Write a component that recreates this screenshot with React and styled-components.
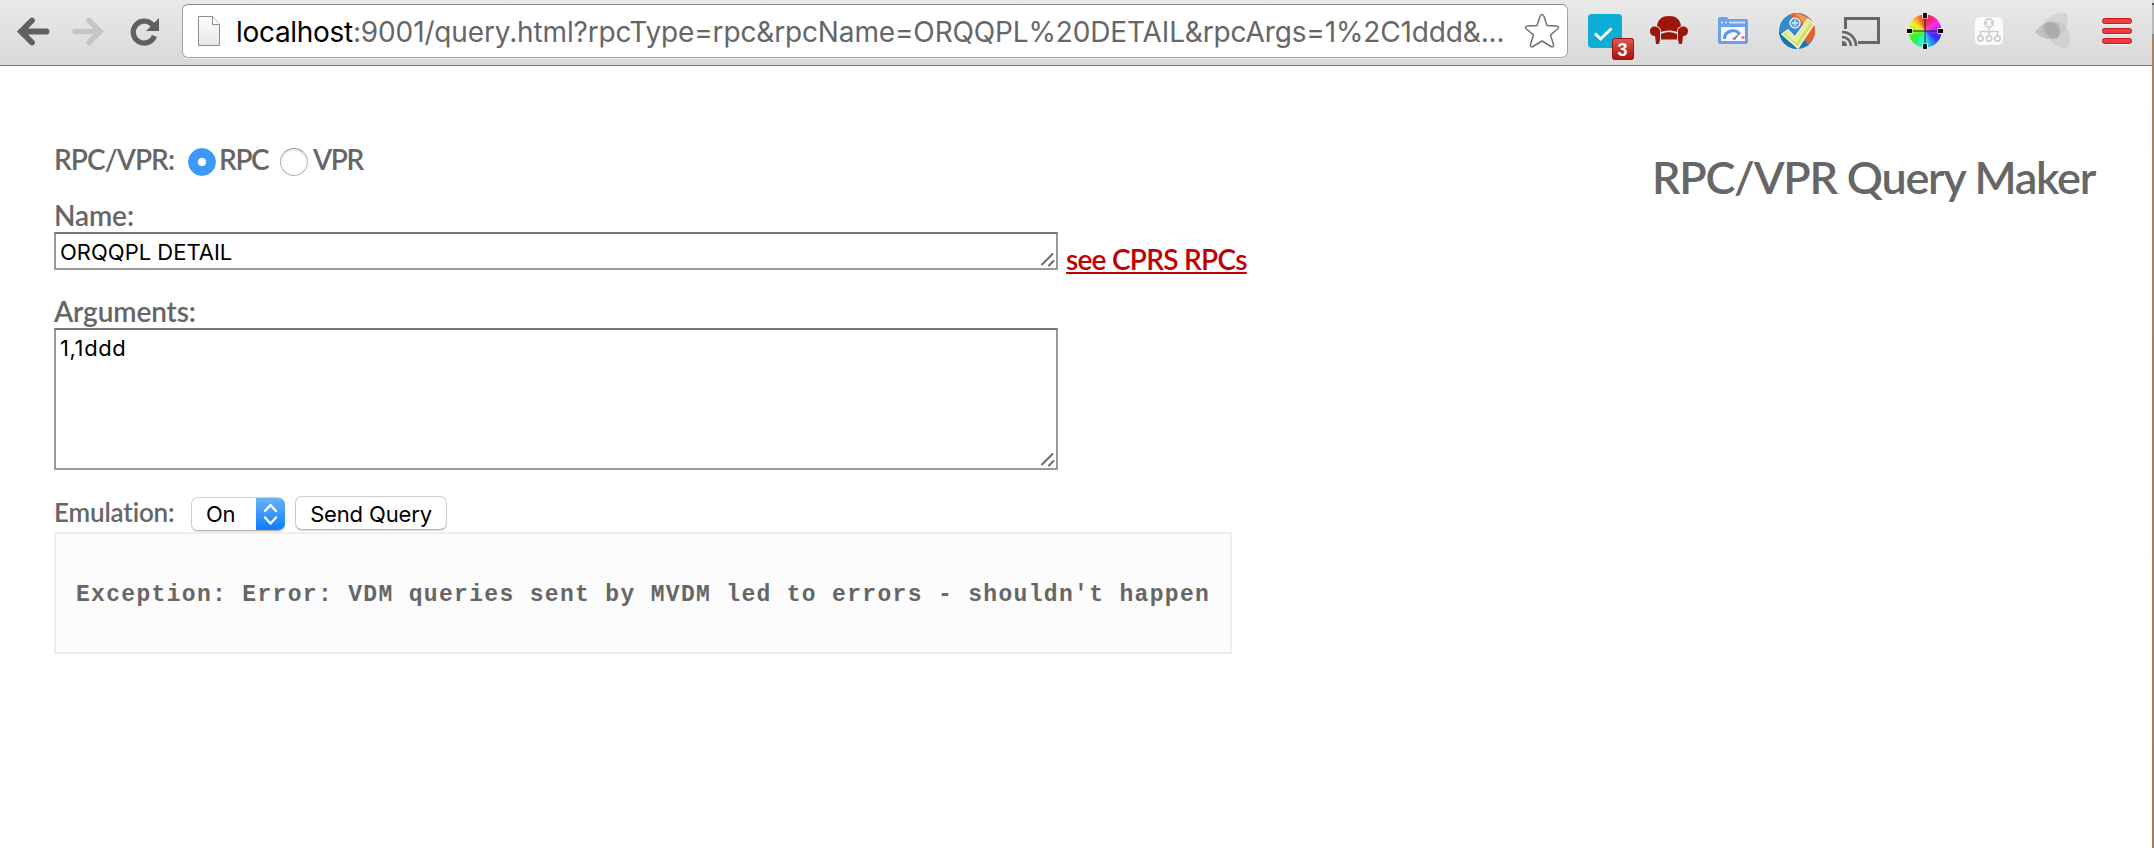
import React from 'react';
import styled, { createGlobalStyle } from 'styled-components';

const GlobalStyle = createGlobalStyle`
  * { box-sizing: border-box; }
  body { margin: 0; background: #fff; overflow: hidden; }
`;

const Window = styled.div`
  display: flex;
  width: 2154px;
  height: 848px;
`;
const Browser = styled.div`
  width: 2152px;
  height: 848px;
`;
const WindowEdge = styled.div`
  width: 2px;
  height: 848px;
  background: linear-gradient(#d8d8d8 3px, #555 3px 5px, #b8b8b8 5px 34px, #888 34px 37px, #a58464 37px 44px, #a07e62 100%);
`;

const Toolbar = styled.header`
  display: flex;
  height: 66px;
  padding-left: 5px;
  background: linear-gradient(#e9e9e9, #d9d9d9);
  border-bottom: 1px solid #777;
`;
const NavIcon = styled.svg`
  width: 55px;
  height: 65px;
  flex: none;
`;
const ExtensionIcon = styled.svg`
  width: 64px;
  height: 65px;
  flex: none;
`;
const AddressBar = styled.div`
  display: flex;
  align-items: center;
  width: 1386px;
  height: 54px;
  margin: 4px 5px 0 12px;
  background: #fff;
  border: 1px solid #a2a2a2;
  border-top-color: #8c8c8c;
  border-radius: 6px;
  box-shadow: 0 1px 0 #f0f0f0;
  flex: none;
`;
const PageIcon = styled.svg`
  width: 24px;
  height: 34px;
  margin: 0 15px 0 14px;
  flex: none;
`;
const Url = styled.div`
  width: 1277px;
  margin-top: 2px;
  font: 400 28px/36px Inter, Roboto, sans-serif;
  letter-spacing: ${(p) => p.$tracking}px;
  white-space: nowrap;
  color: #666;
  flex: none;
`;
const Host = styled.span`
  color: #000;
  letter-spacing: -0.3px;
`;
const StarIcon = styled.svg`
  width: 38px;
  height: 38px;
  margin-left: 10px;
  flex: none;
`;

const Page = styled.main`
  display: flex;
  justify-content: space-between;
  align-items: flex-start;
  padding: 76px 57px 0 54px;
`;
const Form = styled.form`
  display: flex;
  flex-direction: column;
`;
const Title = styled.h1`
  margin: 8px 0 0;
  font: 600 45px/54px Lato, sans-serif;
  letter-spacing: -1.27px;
  color: #666;
  white-space: nowrap;
`;
const Row = styled.div`
  display: flex;
  align-items: flex-start;
  height: ${(p) => p.$height}px;
  margin-bottom: ${(p) => p.$gap || 0}px;
`;
const Label = styled.label`
  font: 600 ${(p) => p.$size || 28}px/${(p) => (p.$size ? 32 : 34)}px Lato, sans-serif;
  letter-spacing: ${(p) => p.$tracking || 0}px;
  font-variant-ligatures: none;
  width: ${(p) => (p.$width ? `${p.$width}px` : 'auto')};
  white-space: nowrap;
  color: #666;
`;
const Radio = styled.input`
  appearance: none;
  width: 28px;
  height: 28px;
  margin: 6px ${(p) => p.$space}px 0 0;
  border-radius: 50%;
  border: 1px solid #b5b5b5;
  border-top-color: #a0a0a0;
  background: #fff;
  box-shadow: inset 0 2px 2px #e6e6e6;
  &:checked {
    border-color: #3b99fc;
    background: radial-gradient(circle, #fff 3.6px, #3b99fc 4.6px);
    box-shadow: none;
  }
`;
const Field = styled.div`
  position: relative;
  width: 1004px;
  height: ${(p) => p.$height}px;
`;
const TextArea = styled.textarea`
  display: block;
  width: 100%;
  height: 100%;
  margin: 0;
  padding: 5px 4px 0;
  border: 2px solid #999;
  border-top-color: #757575;
  resize: none;
  overflow: hidden;
  outline: none;
  background: #fff;
  color: #000;
  font: 400 22px/26px Inter, Roboto, sans-serif;
  letter-spacing: ${(p) => p.$tracking || 0}px;
`;
const Grip = styled.svg`
  position: absolute;
  right: 2px;
  bottom: 2px;
  width: 16px;
  height: 16px;
`;
const Link = styled.a`
  margin: 10px 0 0 8px;
  font: 600 28px/34px Lato, sans-serif;
  letter-spacing: -0.74px;
  color: #c00000;
  text-decoration: underline;
  text-decoration-thickness: 2px;
  text-underline-offset: 2px;
  text-decoration-skip-ink: none;
  white-space: nowrap;
`;
const SelectBox = styled.div`
  display: flex;
  width: 94px;
  height: 34px;
  margin: 1px 10px 0 0;
  border: 1px solid #cfcfcf;
  border-bottom-color: #b5b5b5;
  border-right: 0;
  border-radius: 7px;
  overflow: hidden;
  background: #fff;
  box-shadow: 0 1px 1px rgba(0, 0, 0, 0.12);
`;
const Select = styled.select`
  appearance: none;
  width: 64px;
  height: 32px;
  padding: 0 0 0 14px;
  border: 0;
  background: #fff;
  color: #000;
  font: 400 22px/32px Inter, Roboto, sans-serif;
  letter-spacing: -0.3px;
`;
const Stepper = styled.svg`
  width: 29px;
  height: 34px;
  margin-top: -1px;
  flex: none;
`;
const Button = styled.button`
  width: 152px;
  height: 34px;
  padding: 1px 0 0;
  border: 1px solid #cdcdcd;
  border-bottom-color: #b0b0b0;
  border-radius: 7px;
  background: #fff;
  box-shadow: 0 1px 1px rgba(0, 0, 0, 0.12);
  color: #000;
  font: 400 22px/32px Inter, Roboto, sans-serif;
  letter-spacing: -0.15px;
  white-space: nowrap;
`;
const Result = styled.pre`
  width: 1178px;
  height: 122px;
  margin: 0;
  padding: 47px 20px 0;
  border: 2px solid #eee;
  background: #fcfcfc;
  color: #666;
  font: 700 23px/28px "Courier New", "Liberation Mono", monospace;
  letter-spacing: 1.32px;
`;

const ResizeGrip = () => (
  <Grip viewBox="0 0 16 16">
    <path d="M1.500 13 13 1.500M8.500 14l5.500-5.500" stroke="#666" strokeWidth="1.800" fill="none" />
  </Grip>
);

const WHEEL_STEPS = 36;
const wheelSlice = (i) => {
  const r = 16.5;
  const a = (i / WHEEL_STEPS) * 2 * Math.PI;
  const b = ((i + 1.1) / WHEEL_STEPS) * 2 * Math.PI;
  return `M32 31L${32 + r * Math.sin(a)} ${31 - r * Math.cos(a)}A${r} ${r} 0 0 1 ${32 + r * Math.sin(b)} ${31 - r * Math.cos(b)}Z`;
};
const wheelColor = (i) => `hsl(${355 - (i * 360) / WHEEL_STEPS} 92% 55%)`;

const Extensions = () => (
  <>
    <ExtensionIcon viewBox="0 0 64 65">
      <rect x="15" y="14" width="34" height="34" rx="4" fill="#0caed6" />
      <path d="M22 33.500l5.500 5.500 11-10.500" fill="none" stroke="#fff" strokeWidth="3" />
      <defs>
        <linearGradient id="badge" x1="0" y1="0" x2="0" y2="1">
          <stop stopColor="#e05a55" />
          <stop offset="1" stopColor="#a80f0b" />
        </linearGradient>
      </defs>
      <rect x="39.5" y="38.5" width="21" height="21" rx="2" fill="url(#badge)" stroke="#a1120e" />
      <text x="49.5" y="55.5" textAnchor="middle" fontFamily="Liberation Sans, sans-serif" fontWeight="700" fontSize="18" fill="#fff">3</text>
    </ExtensionIcon>
    <ExtensionIcon viewBox="0 0 64 65">
      <g fill="#9c160c">
        <path d="M20 26c1-7 5-10 12-10s11 3 12 10c-3 1-4 3-4 6-5-2-11-2-16 0 0-3-1-5-4-6Z" />
        <path d="M13 31c0-3 2-4.500 4.500-4.500S23 28 23 31v9l-1 4h-3l-1-8c-3 0-5-2-5-5ZM51 31c0-3-2-4.500-4.500-4.500S41 28 41 31v9l1 4h3l1-8c3 0 5-2 5-5Z" />
        <path d="M24 34c5-2.500 11-2.500 16 0v5.500H24Z" />
      </g>
    </ExtensionIcon>
    <ExtensionIcon viewBox="0 0 64 65">
      <path d="M17 19q0-2 2-2h6q2 0 2 2h18q2 0 2 2v21q0 2-2 2H19q-2 0-2-2Z" fill="#6c9fec" />
      <path d="M20 22.500h2M24 22.500h2M28 22.500h16" stroke="#c8ddff" strokeWidth="2" />
      <rect x="20" y="27" width="24" height="14" fill="#f3f7ff" />
      <path d="M23.500 39c0-9 12-11 15-4.500" fill="none" stroke="#5b94e9" strokeWidth="3" />
      <path d="M31 39l8-6-5 7Z" fill="#7d7d84" />
      <path d="M42 36v3" stroke="#ee7e78" strokeWidth="3" />
    </ExtensionIcon>
    <ExtensionIcon viewBox="0 0 64 65">
      <circle cx="32" cy="31" r="18" fill="#3389c9" />
      <path d="M24 15C34 10 47 17 50 28c1 8-3 13-8 17l-4-19Z" fill="#e9622c" />
      <path d="M29 14c8-1 14 4 17 9l-7 4c-1-6-4-10-10-13Z" fill="#f49a50" />
      <path d="M14 32c1 8 8 16 17 17l13-4-11-9Z" fill="#1b75b1" />
      <circle cx="30" cy="23" r="5" fill="#579bd9" stroke="#d9edff" strokeWidth="1.500" />
      <path d="M30 20v6M27 23h6" stroke="#d9edff" strokeWidth="1.300" />
      <path d="M17 34l6-4 7 7 13-18 6 5-16 24Z" fill="#d3df72" stroke="#f4f8c8" strokeWidth="1.500" />
      <path d="M22 33l9 8 13-19" fill="none" stroke="#e9f0a8" strokeWidth="2.500" />
    </ExtensionIcon>
    <ExtensionIcon viewBox="0 0 64 65">
      <path d="M16.500 29V18.500h33v24H29" fill="none" stroke="#666" strokeWidth="3" />
      <path d="M13 32c8 0 14 6 14 14M13 37c5 0 9 4 9 9" fill="none" stroke="#666" strokeWidth="2.600" />
      <path d="M13 41q5 0 5 5h-5Z" fill="#666" />
    </ExtensionIcon>
    <ExtensionIcon viewBox="0 0 64 65">
      {Array.from({ length: WHEEL_STEPS }, (_, i) => (
        <path key={i} d={wheelSlice(i)} fill={wheelColor(i)} />
      ))}
      <path d="M32 18v26M19 31h26" stroke="#24242a" strokeWidth="1" />
      <path d="M32 13v5.500M32 43.500v5.500M14 31h5.500M44.500 31h5.500" stroke="#fff" strokeWidth="5.500" />
      <path d="M32 13v5M32 44v5M14 31h5M45 31h5" stroke="#000" strokeWidth="3.800" />
    </ExtensionIcon>
    <ExtensionIcon viewBox="0 0 64 65">
      <rect x="18" y="17" width="28" height="28" rx="5" fill="#fafafa" />
      <g fill="none" stroke="#cdcdcd" strokeWidth="1.700">
        <circle cx="32" cy="23" r="4.200" />
        <circle cx="23.500" cy="38.500" r="2.700" />
        <circle cx="32" cy="38.500" r="2.700" />
        <circle cx="40.500" cy="38.500" r="2.700" />
        <path d="M32 27v9M23.500 36v-4.500h17V36" />
        <path d="M31 21l-2 2 2 2M33 21l2 2-2 2" strokeWidth="1" />
      </g>
    </ExtensionIcon>
    <ExtensionIcon viewBox="0 0 64 65">
      <path d="M23 22c6-7 20-13 23-7 3 8-4 23-14 24-6 0-10-5-11-10Z" fill="#bbb" opacity=".4" />
      <path d="M31 24c6-4 13-1 16 6 4 9 3 17-3 18-8 0-16-6-17-14-1-4 1-8 4-10Z" fill="#bdbdbd" opacity=".4" />
      <path d="M14 32c5-7 14-13 20-10 6 2 7 11 3 15-6 5-18 1-23-5Z" fill="#a7a7a7" opacity=".55" />
      <path d="M24 24c4-4 11-2 13 4 2 4 1 8 0 10-7 2-16-6-13-14Z" fill="#999" opacity=".4" />
    </ExtensionIcon>
    <ExtensionIcon viewBox="0 0 64 65">
      {[18, 28, 38].map((y) => (
        <g key={y}>
          <rect x="17" y={y + 1} width="30" height="6" rx="2.5" fill="#f4f4f4" />
          <rect x="17.500" y={y + 0.5} width="29" height="5" rx="2" fill="#ea3e42" stroke="#d0181e" />
        </g>
      ))}
    </ExtensionIcon>
  </>
);

export default function App() {
  return (
    <Window>
      <GlobalStyle />
      <Browser>
        <Toolbar>
          <NavIcon viewBox="0 0 55 65">
            <path d="M41.500 31.500H16M27 20.500l-11 11 11 11" fill="none" stroke="#606060" strokeWidth="5.800" strokeLinecap="round" strokeLinejoin="miter" />
          </NavIcon>
          <NavIcon viewBox="0 0 55 65">
            <path d="M15 31.500H39M29 20.500l11 11-11 11" fill="none" stroke="#c5c5c5" strokeWidth="5.500" strokeLinecap="round" strokeLinejoin="miter" />
          </NavIcon>
          <NavIcon viewBox="0 0 55 65">
            <path d="M38 25.500A11 11 0 1 0 39.500 36" fill="none" stroke="#606060" strokeWidth="5.200" />
            <path d="M44 18v13H31Z" fill="#606060" />
          </NavIcon>
          <AddressBar>
            <PageIcon viewBox="0 0 24 34">
              <defs>
                <linearGradient id="sheet" x1="0" y1="0" x2="0" y2="1">
                  <stop stopColor="#fff" />
                  <stop offset="1" stopColor="#e6e6e6" />
                </linearGradient>
              </defs>
              <path d="M1.500 2.500h14l7 8v21h-21Z" fill="url(#sheet)" stroke="#8c8c8c" />
              <path d="M15.500 2.500v8h7" fill="#fff" stroke="#8c8c8c" />
            </PageIcon>
            <Url $tracking={-0.14}>
              <Host>localhost</Host>:9001/query.html?rpcType=rpc&amp;rpcName=ORQQPL%20DETAIL&amp;rpcArgs=1%2C1ddd&amp;...
            </Url>
            <StarIcon viewBox="0 0 38 38">
              <path d="M19 2.500Q20.300 2.500 21 4.500L24 13.500 33.500 14Q37 14.800 34.500 17L27.500 23 30.500 32.500Q31 35.800 28 34.500L19 29 10 34.500Q7 35.800 7.500 32.500L10.500 23 3.500 17Q1 14.800 4.500 14L14 13.500 17 4.500Q17.700 2.500 19 2.500Z" fill="#fff" stroke="#707070" strokeWidth="1.500" />
            </StarIcon>
          </AddressBar>
          <Extensions />
        </Toolbar>

        <Page>
          <Form onSubmit={(e) => e.preventDefault()}>
            <Row $height={34} $gap={22}>
              <Label as="span" $tracking={-0.95} $width={134}>RPC/VPR:</Label>
              <Radio type="radio" name="kind" id="rpc" $space={3} defaultChecked />
              <Label htmlFor="rpc" $tracking={-1.4} $width={61}>RPC</Label>
              <Radio type="radio" name="kind" id="vpr" $space={5} />
              <Label htmlFor="vpr" $tracking={-1.4}>VPR</Label>
            </Row>
            <Label htmlFor="name" $tracking={-0.1}>Name:</Label>
            <Row $height={38} $gap={24}>
              <Field $height={38}>
                <TextArea id="name" rows={1} defaultValue="ORQQPL DETAIL" spellCheck={false} />
                <ResizeGrip />
              </Field>
              <Link href="#rpcs">see CPRS RPCs</Link>
            </Row>
            <Label htmlFor="args" $tracking={-0.1}>Arguments:</Label>
            <Row $height={142} $gap={26}>
              <Field $height={142}>
                <TextArea id="args" $tracking={0.6} defaultValue="1,1ddd" spellCheck={false} />
                <ResizeGrip />
              </Field>
            </Row>
            <Row $height={36}>
              <Label htmlFor="emulation" $size={26} $tracking={-0.15} $width={137}>Emulation:</Label>
              <SelectBox>
                <Select id="emulation" defaultValue="On">
                  <option>On</option>
                  <option>Off</option>
                </Select>
                <Stepper viewBox="0 0 29 34">
                  <defs>
                    <linearGradient id="stepper" x1="0" y1="0" x2="0" y2="1">
                      <stop stopColor="#6bb3fa" />
                      <stop offset="1" stopColor="#077cff" />
                    </linearGradient>
                  </defs>
                  <rect width="29" height="34" fill="url(#stepper)" />
                  <path d="M9 14l5.500-6 5.500 6M9 20.500l5.500 6 5.500-6" fill="none" stroke="#fff" strokeWidth="2.400" strokeLinecap="round" strokeLinejoin="round" />
                </Stepper>
              </SelectBox>
              <Button type="submit">Send Query</Button>
            </Row>
            <Result>Exception: Error: VDM queries sent by MVDM led to errors - shouldn't happen</Result>
          </Form>
          <Title>RPC/VPR Query Maker</Title>
        </Page>
      </Browser>
      <WindowEdge />
    </Window>
  );
}
